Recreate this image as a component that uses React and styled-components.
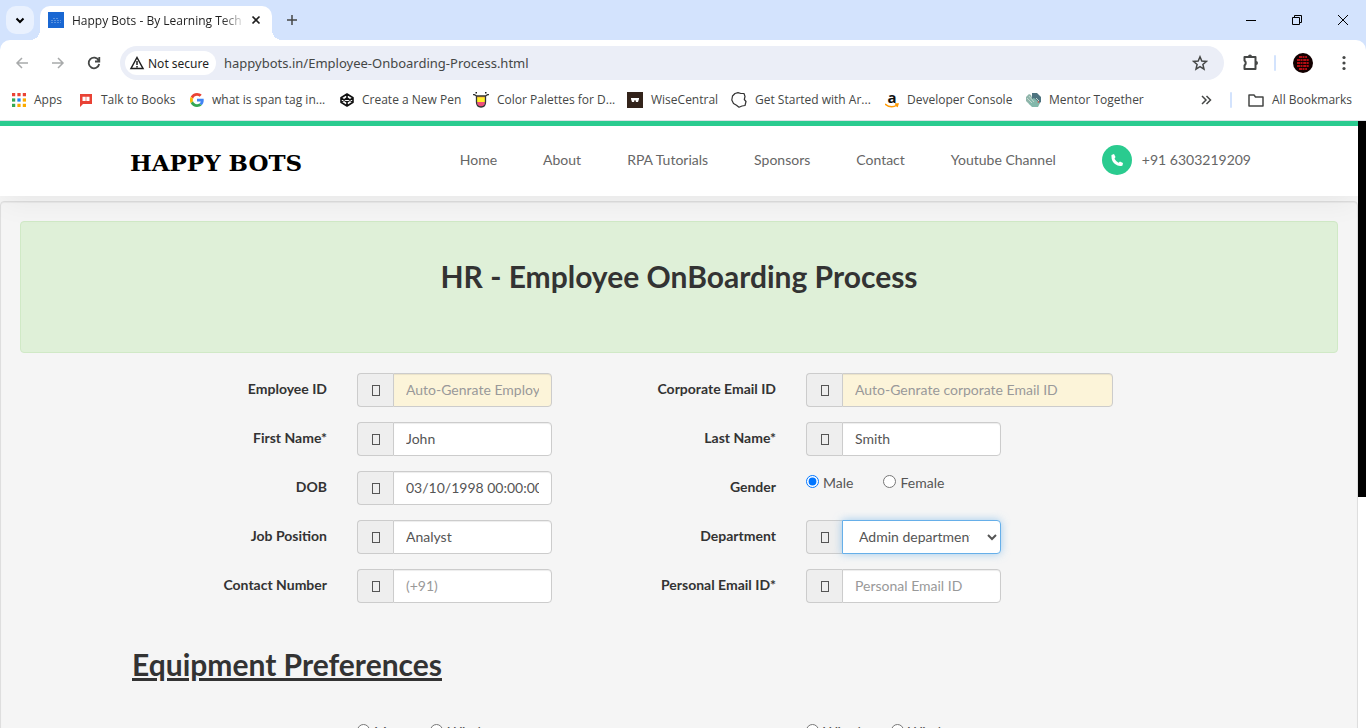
import React from "react";
import styled, { createGlobalStyle, css } from "styled-components";

const uiFont = `"Noto Sans", "Open Sans", sans-serif`;
const pageFont = `Lato, "Open Sans", sans-serif`;

const Global = createGlobalStyle`
  *, *::before, *::after { box-sizing: border-box; }
  html, body, #root { height: 100%; margin: 0; }
  body { overflow: hidden; background: #f5f5f5; }
  button { font: inherit; border: 0; padding: 0; background: none; color: inherit; cursor: pointer; }
  a { color: inherit; text-decoration: none; }
  svg { display: block; flex: none; }
`;

const Browser = styled.div`
  height: 100vh;
  display: flex;
  flex-direction: column;
  font-family: ${uiFont};
`;
const TabStrip = styled.div`
  height: 40px;
  flex: none;
  display: flex;
  align-items: flex-start;
  padding: 6px 0 0 6px;
  background: #d3e3fd;
`;
const TabSearch = styled.button`
  && { background: #e9f1fe; }
  width: 28px;
  height: 28px;
  display: grid;
  place-items: center;
  border-radius: 10px;
`;
const Tab = styled.div`
  position: relative;
  width: 232px;
  height: 34px;
  margin-left: 6px;
  padding: 0 8px 6px 8px;
  display: flex;
  align-items: center;
  gap: 8px;
  border-radius: 10px 10px 0 0;
  background: #fff;
  font-family: "Open Sans", sans-serif;
  font-size: 12px;
  color: #1f1f1f;
  &::before, &::after {
    content: "";
    position: absolute;
    bottom: 0;
    width: 10px;
    height: 10px;
  }
  &::before { left: -10px; background: radial-gradient(circle at 0 0, transparent 10px, #fff 10px); }
  &::after { right: -10px; background: radial-gradient(circle at 100% 0, transparent 10px, #fff 10px); }
`;
const TabTitle = styled.span`
  flex: 1;
  margin-right: -6px;
  overflow: hidden;
  white-space: nowrap;
  mask-image: linear-gradient(to right, #000 86%, transparent);
`;
const PlainButton = styled.button`
  display: grid;
  place-items: center;
  width: ${(p) => p.$w || 16}px;
  height: ${(p) => p.$h || 28}px;
  && { color: ${(p) => p.$color || "#454746"}; }
`;
const WindowButtons = styled.div`
  margin-left: auto;
  display: flex;
`;
const ToolbarBack = styled.div`
  flex: none;
  background: #d3e3fd;
`;
const Toolbar = styled.div`
  height: 46px;
  display: flex;
  align-items: center;
  padding: 0 8px;
  background: #fff;
  border-radius: 10px 10px 0 0;
`;
const NavButtons = styled.div`
  display: flex;
  gap: 8px;
  margin-right: 12px;
`;
const AddressBar = styled.div`
  flex: 1;
  height: 34px;
  display: flex;
  align-items: center;
  gap: 8px;
  padding: 0 10px 0 5px;
  border-radius: 17px;
  background: #ebeef7;
`;
const SecurityChip = styled.button`
  && {
    padding: 0 7px 0 4px;
    background: #fff;
    font-size: 12px;
    color: #1f1f1f;
  }
  height: 24px;
  display: flex;
  align-items: center;
  gap: 3px;
  border-radius: 12px;
`;
const Url = styled.input`
  flex: 1;
  min-width: 0;
  padding: 0;
  border: 0;
  outline: 0;
  background: transparent;
  font: 13px "Noto Sans", sans-serif;
  color: #454746;
`;
const Divider = styled.span`
  width: 2px;
  height: 16px;
  border-radius: 1px;
  background: #d3e3fd;
`;
const ToolbarEnd = styled.div`
  display: flex;
  align-items: center;
  gap: 14px;
  padding-left: 18px;
`;
const Bookmarks = styled.nav`
  height: 35px;
  flex: none;
  display: flex;
  align-items: center;
  padding: 0 14px 7px 12px;
  background: #fff;
  border-bottom: 1px solid #dde1e6;
  font-family: "Open Sans", sans-serif;
  font-size: 12px;
  color: #454746;
`;
const Bookmark = styled.a`
  display: flex;
  align-items: center;
  gap: 8px;
  width: ${(p) => (p.$w ? p.$w + "px" : "auto")};
  white-space: nowrap;
`;
const BookmarksEnd = styled.div`
  margin-left: auto;
  display: flex;
  align-items: center;
  gap: 16px;
`;

const Viewport = styled.div`
  flex: 1;
  min-height: 0;
  display: flex;
`;
const Page = styled.main`
  flex: 1;
  min-width: 0;
  overflow: hidden;
  background: #f5f5f5;
  font-family: ${pageFont};
  font-size: 14px;
  line-height: 20px;
  color: #333;
`;
const Scrollbar = styled.div`
  width: 8px;
  background: linear-gradient(#000 62%, #fff 62%);
`;
const SiteHeader = styled.header`
  position: relative;
  height: 75px;
  border-top: 5px solid #2acb8f;
  background: #fff;
  box-shadow: 0 10px 30px -4px rgba(0, 0, 0, 0.06);
`;
const HeaderInner = styled.div`
  height: 70px;
  max-width: 1144px;
  margin: 0 auto;
  padding: 0 0 2px 23px;
  display: flex;
  align-items: center;
  justify-content: space-between;
`;
const Logo = styled.a`
  padding-top: 5px;
  font: bold 23px "DejaVu Serif", serif;
  color: #000;
`;
const SiteNav = styled.nav`
  display: flex;
  align-items: center;
  gap: 46px;
  font-size: 14px;
  color: #666;
`;
const Phone = styled.a`
  display: flex;
  align-items: center;
  gap: 10px;
`;
const PhoneBadge = styled.span`
  width: 30px;
  height: 30px;
  display: grid;
  place-items: center;
  border-radius: 50%;
  background: #2acb8f;
`;
const Well = styled.section`
  margin-top: 5px;
  padding: 19px;
  min-height: 700px;
  border: 1px solid #dedede;
  border-radius: 4px;
  background: #f5f5f5;
  box-shadow: inset 0 1px 1px rgba(0, 0, 0, 0.05);
`;
const Banner = styled.div`
  height: 132px;
  padding-top: 34px;
  border: 1px solid #d0e9c6;
  border-radius: 4px;
  background: #dff0d8;
  text-align: center;
`;
const Title = styled.h2`
  margin: 0;
  font-size: 30px;
  line-height: 40px;
  font-weight: 700;
`;
const Form = styled.form`
  max-width: 1094px;
  margin: 20px auto 0;
`;
const FieldGrid = styled.div`
  display: grid;
  grid-template-columns: 449px 1fr;
  row-gap: 15px;
`;
const Field = styled.div`
  height: 34px;
  display: grid;
  grid-template-columns: 195px ${(p) => (p.$wide ? 307 : 195)}px;
  column-gap: 30px;
`;
const labelText = css`
  text-align: right;
  font-size: 14px;
  font-weight: 700;
  line-height: 20px;
  padding-top: 6px;
`;
const Label = styled.label`${labelText}`;
const GroupLabel = styled.span`
  ${labelText}
`;
const InputGroup = styled.div`
  display: flex;
`;
const Addon = styled.span`
  width: 36px;
  display: grid;
  place-items: center;
  border: 1px solid #ccc;
  border-right: 0;
  border-radius: 4px 0 0 4px;
  background: #eee;
`;
const MissingGlyph = styled.i`
  width: 8px;
  height: 11px;
  border: 1px solid #555;
`;
const control = css`
  flex: 1;
  min-width: 0;
  height: 34px;
  padding: 5px 12px 7px;
  border: 1px solid #ccc;
  border-radius: 0 4px 4px 0;
  background: #fff;
  box-shadow: inset 0 1px 1px rgba(0, 0, 0, 0.075);
  font-family: ${pageFont};
  font-size: 14px;
  color: #555;
  outline: 0;
`;
const Input = styled.input`
  ${control}
  &::placeholder { color: #999; opacity: 1; }
  &:read-only { background: #fcf4d9; }
`;
const Select = styled.select`
  ${control}
  padding: 0 14px 2px 12px;
  border-color: #66afe9;
  box-shadow: 0 0 8px rgba(102, 175, 233, 0.6);
`;
const Radios = styled.div`
  display: flex;
  align-items: flex-start;
  gap: 30px;
  padding-top: 2px;
  font-size: 14px;
  color: #555;
`;
const RadioLabel = styled.label`
  display: flex;
  gap: 4px;
  white-space: nowrap;
  input { width: 13px; height: 13px; margin: 2px 0 0; }
`;
const SectionTitle = styled.h2`
  margin: 41px 0 36px;
  font-size: 30px;
  line-height: 40px;
  font-weight: 700;
  text-decoration: underline;
`;

const Stroke = ({ size = 16, w = 1.5, children }) => (
  <svg width={size} height={size} viewBox="0 0 16 16" fill="none" stroke="currentColor" strokeWidth={w}>
    {children}
  </svg>
);

const icons = {
  apps: (
    <svg width="14" height="14" viewBox="0 0 13 13">
      {["#ea4335", "#ea4335", "#ea4335", "#34a853", "#1a84f4", "#fbab00", "#34a853", "#fbab00", "#fbab00"].map((c, i) => (
        <rect key={i} x={(i % 3) * 5} y={Math.floor(i / 3) * 5} width="3" height="3" fill={c} />
      ))}
    </svg>
  ),
  books: (
    <svg width="14" height="14" viewBox="0 0 14 14">
      <path d="M1 1h12v10H4l-3 3z" fill="#e94235" />
      <path d="M3.500 3.800h3.200V8H3.500zM7.300 3.800h3.200V8H7.300z" fill="#fff" />
    </svg>
  ),
  google: (
    <svg width="14" height="14" viewBox="0 0 48 48">
      <path fill="#ea4335" d="M24 9.5c3.5 0 6.700 1.200 9.200 3.600l6.900-6.900C35.900 2.400 30.500 0 24 0 14.600 0 6.500 5.400 2.600 13.200l8 6.200C12.400 13.700 17.700 9.500 24 9.500z" />
      <path fill="#4285f4" d="M47 24.600c0-1.600-.2-3.100-.4-4.600H24v9h12.900c-.6 3-2.300 5.500-4.800 7.200l7.700 6C44.400 38 47 31.800 47 24.600z" />
      <path fill="#fbbc05" d="M10.500 28.600a14.500 14.500 0 0 1 0-9.200l-8-6.200a24 24 0 0 0 0 21.600z" />
      <path fill="#34a853" d="M24 48c6.500 0 11.900-2.100 15.900-5.800l-7.700-6c-2.200 1.500-5 2.300-8.200 2.300-6.300 0-11.600-4.200-13.500-9.900l-8 6.200C6.500 42.600 14.600 48 24 48z" />
    </svg>
  ),
  codepen: (
    <svg width="14" height="14" viewBox="0 0 14 14" fill="none" stroke="#111" strokeWidth="1.600" strokeLinejoin="round">
      <path d="M7 1l6 3.800v4.400L7 13 1 9.200V4.800zM1 4.800l6 4.200 6-4.200M1 9.200L7 5l6 4.200M7 1v4M7 9v4" />
    </svg>
  ),
  palette: (
    <svg width="16" height="16" viewBox="0 0 16 16">
      <path d="M4 4h8v3H4z" fill="#ffc93b" /><path d="M4 6h8v4H4z" fill="#fff02a" />
      <path d="M4 10h8q0 5-4 5t-4-5z" fill="#f0507a" />
      <path d="M0 2.700h1.500L3.500 4h9l2-1.300H16M3.500 4v6q0 5 4.500 5t4.500-5V4" fill="none" stroke="#333" strokeWidth="1.300" />
      <path d="M2.500 0H4v1.500H2.500zM12 0h1.500v1.500H12z" fill="#222" />
    </svg>
  ),
  wise: (
    <svg width="16" height="16" viewBox="0 0 16 16">
      <path d="M0 0h16v16H0z" fill="#33231b" />
      <path d="M4 6h8v1l-1 3H9L8.300 8h-.6L7 10H5L4 7z" fill="#fff" />
    </svg>
  ),
  blob: (
    <svg width="16" height="16" viewBox="0 0 16 16" fill="none" stroke="#333" strokeWidth="1.200">
      <path d="M4 1.500L7 .7l3 .8 3 0 1 3-.7 3 1.700 2-1 4-3 .5-3 1.200-2.500-2L2.500 11.500.8 8l.7-4z" strokeLinejoin="round" />
    </svg>
  ),
  mentor: (
    <svg width="16" height="16" viewBox="0 0 16 16">
      <path d="M1 5l3-3 2 1 3 8-1 3-4-2-3-3z" fill="#8fb5aa" />
      <path d="M7 1h5l4 4v5l-4 3-5-5z" fill="#4e7480" />
      <path d="M5 8l4-2 6 5-2 4H7l-3-3z" fill="#83b8ab" />
      <path d="M2 6l5 5M4 4l5 6M11 6l3 3" stroke="#c3d8d1" />
      <path d="M12 10l2-1v2z" fill="#d65a50" />
    </svg>
  ),
};

const AmazonMark = styled.span`
  position: relative;
  width: 14px;
  height: 16px;
  font: bold 15px/11px "Open Sans", sans-serif;
  text-align: center;
  color: #111;
  svg { position: absolute; left: 0; bottom: 0; }
`;
const Amazon = () => (
  <AmazonMark>
    a
    <svg width="14" height="5" viewBox="0 0 14 5" fill="none" stroke="#ff9900" strokeWidth="1.500">
      <path d="M0 1q6 5 12 1M10 1h3l-1 3" />
    </svg>
  </AmazonMark>
);

const bookmarks = [
  ["Apps", icons.apps, 67],
  ["Talk to Books", icons.books, 111],
  ["what is span tag in...", icons.google, 150],
  ["Create a New Pen", icons.codepen, 133],
  ["Color Palettes for D...", icons.palette, 154],
  ["WiseCentral", icons.wise, 104],
  ["Get Started with Ar...", icons.blob, 154],
  ["Developer Console", <Amazon />, 140],
  ["Mentor Together", icons.mentor, 0],
];

const TextField = ({ id, label, wide, ...rest }) => (
  <Field $wide={wide}>
    <Label htmlFor={id}>{label}</Label>
    <InputGroup>
      <Addon><MissingGlyph /></Addon>
      <Input id={id} {...rest} />
    </InputGroup>
  </Field>
);

const RadioField = ({ name, label, options, checked }) => (
  <Field role="radiogroup" aria-label={label || name}>
    <GroupLabel>{label}</GroupLabel>
    <Radios>
      {options.map((o, i) => (
        <RadioLabel key={o}>
          <input type="radio" name={name} defaultChecked={checked && i === 0} />
          {o}
        </RadioLabel>
      ))}
    </Radios>
  </Field>
);

const Chrome = () => (
  <>
    <TabStrip>
      <TabSearch aria-label="Search tabs">
        <Stroke w={2}><path d="M4.500 6.500L8 10l3.500-3.500" /></Stroke>
      </TabSearch>
      <Tab>
        <svg width="16" height="16" viewBox="0 0 16 16">
          <path d="M0 0h16v16H0z" fill="#1967d2" />
          <path d="M5 6.500h6M3 8.500h10M3 10.500h10" stroke="#5b93e0" strokeDasharray="2 1" />
        </svg>
        <TabTitle>Happy Bots - By Learning Tech</TabTitle>
        <PlainButton $w={16} $h={16} $color="#1f1f1f" aria-label="Close tab">
          <Stroke w={1.700}><path d="M4.500 4.500l7 7M11.500 4.500l-7 7" /></Stroke>
        </PlainButton>
      </Tab>
      <PlainButton $w={40} aria-label="New tab">
        <Stroke><path d="M8 3v10M3 8h10" /></Stroke>
      </PlainButton>
      <WindowButtons>
        <PlainButton $w={46} $color="#000" aria-label="Minimize">
          <Stroke w={1}><path d="M3 8.500h10" /></Stroke>
        </PlainButton>
        <PlainButton $w={46} $color="#000" aria-label="Restore">
          <Stroke w={1}><path d="M3.500 5.500h7v7h-7zM5.500 5.500v-2h7v7h-2" /></Stroke>
        </PlainButton>
        <PlainButton $w={46} $color="#000" aria-label="Close">
          <Stroke w={1}><path d="M3 3l10 10M13 3L3 13" /></Stroke>
        </PlainButton>
      </WindowButtons>
    </TabStrip>
    <ToolbarBack>
      <Toolbar>
        <NavButtons>
          <PlainButton $w={28} $color="#a8aaab" aria-label="Back">
            <Stroke><path d="M14 8H3M8 3L3 8l5 5" /></Stroke>
          </PlainButton>
          <PlainButton $w={28} $color="#a8aaab" aria-label="Forward">
            <Stroke><path d="M2 8h11M8 3l5 5-5 5" /></Stroke>
          </PlainButton>
          <PlainButton $w={28} aria-label="Reload">
            <Stroke w={1.800}><path d="M12.700 5.500A5.300 5.300 0 1 0 13.200 9M13.300 2v4.500H9" /></Stroke>
          </PlainButton>
        </NavButtons>
        <AddressBar>
          <SecurityChip>
            <Stroke><path d="M8 2.500L14 13.500H2zM8 6v4M8 11v1.500" /></Stroke>
            Not secure
          </SecurityChip>
          <Url aria-label="Address" defaultValue="happybots.in/Employee-Onboarding-Process.html" />
          <PlainButton $w={28} aria-label="Bookmark this page">
            <Stroke><path d="M8 1.800l1.800 4.200 4.700.4-3.600 3.100 1.100 4.600-4-2.400-4 2.400 1.100-4.600-3.600-3.100 4.700-.4z" /></Stroke>
          </PlainButton>
        </AddressBar>
        <ToolbarEnd>
          <PlainButton $w={18} aria-label="Extensions">
            <svg width="18" height="18" viewBox="0 0 18 18">
              <path d="M2.500 3h11v12h-11v-3.500q2.500-2.500 0-5z" fill="none" stroke="currentColor" strokeWidth="2" strokeLinejoin="round" />
              <path d="M6 2.500a2 2 0 0 1 4 0zM14 7a2 2 0 0 1 0 4z" fill="currentColor" />
            </svg>
          </PlainButton>
          <Divider />
          <PlainButton $w={26} aria-label="Profile">
            <svg width="20" height="20" viewBox="0 0 20 20">
              <circle cx="10" cy="10" r="10" fill="#120000" />
              <path d="M6 4h8M4 7h12M4 10h12M4 13h12M6 16h8" stroke="#b30d13" strokeWidth="2" strokeDasharray="3 .5 2 .7" />
            </svg>
          </PlainButton>
          <PlainButton $w={28} aria-label="Menu">
            <svg width="16" height="16" viewBox="0 0 16 16" fill="currentColor">
              <circle cx="8" cy="2.500" r="1.600" /><circle cx="8" cy="8" r="1.600" /><circle cx="8" cy="13.500" r="1.600" />
            </svg>
          </PlainButton>
        </ToolbarEnd>
      </Toolbar>
    </ToolbarBack>
    <Bookmarks>
      {bookmarks.map(([text, icon, w]) => (
        <Bookmark key={text} href="#" $w={w}>{icon}{text}</Bookmark>
      ))}
      <BookmarksEnd>
        <PlainButton aria-label="More bookmarks">
          <Stroke><path d="M4 4l4 4-4 4M8.500 4l4 4-4 4" /></Stroke>
        </PlainButton>
        <Divider />
        <Bookmark href="#">
          <Stroke><path d="M1 3h5l1.500 2H15v9H1z" strokeLinejoin="round" /></Stroke>
          All Bookmarks
        </Bookmark>
      </BookmarksEnd>
    </Bookmarks>
  </>
);

export default function App() {
  return (
    <>
      <Global />
      <Browser>
        <Chrome />
        <Viewport>
          <Page>
            <SiteHeader>
              <HeaderInner>
                <Logo href="#">HAPPY BOTS</Logo>
                <SiteNav>
                  {["Home", "About", "RPA Tutorials", "Sponsors", "Contact", "Youtube Channel"].map((t) => (
                    <a key={t} href="#">{t}</a>
                  ))}
                  <Phone href="tel:+916303219209">
                    <PhoneBadge>
                      <svg width="12" height="12" viewBox="0 0 12 12" fill="#fff">
                        <path d="M3 0L0.500 1Q0 7 4 10t7.500 1.500L12 9 9 7.500 7.500 8.700Q5 7.500 3.500 4.700L4.500 3z" />
                      </svg>
                    </PhoneBadge>
                    +91 6303219209
                  </Phone>
                </SiteNav>
              </HeaderInner>
            </SiteHeader>
            <Well>
              <Banner><Title>HR - Employee OnBoarding Process</Title></Banner>
              <Form>
                <FieldGrid>
                  <TextField id="employee-id" label="Employee ID" placeholder="Auto-Genrate Employee ID" readOnly />
                  <TextField id="corp-email" label="Corporate Email ID" placeholder="Auto-Genrate corporate Email ID" wide readOnly />
                  <TextField id="first-name" label="First Name*" defaultValue="John" />
                  <TextField id="last-name" label="Last Name*" defaultValue="Smith" />
                  <TextField id="dob" label="DOB" defaultValue="03/10/1998 00:00:00" />
                  <RadioField name="gender" label="Gender" options={["Male", "Female"]} checked />
                  <TextField id="job" label="Job Position" defaultValue="Analyst" />
                  <Field>
                    <Label htmlFor="department">Department</Label>
                    <InputGroup>
                      <Addon><MissingGlyph /></Addon>
                      <Select id="department"><option>Admin department</option></Select>
                    </InputGroup>
                  </Field>
                  <TextField id="contact" label="Contact Number" placeholder="(+91)" />
                  <TextField id="personal-email" label="Personal Email ID*" placeholder="Personal Email ID" />
                </FieldGrid>
                <SectionTitle>Equipment Preferences</SectionTitle>
                <FieldGrid>
                  <RadioField name="computer" options={["Mac", "Windows"]} />
                  <RadioField name="mouse" options={["Wired", "Wireless"]} />
                </FieldGrid>
              </Form>
            </Well>
          </Page>
          <Scrollbar />
        </Viewport>
      </Browser>
    </>
  );
}
